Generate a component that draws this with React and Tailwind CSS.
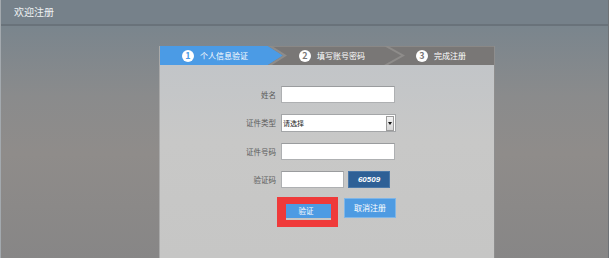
const steps = [
    { n: 1, label: '个人信息验证', w: 'w-[123px]', pl: 'pl-[22px]', num: 'text-[#4b9be5]' },
    { n: 2, label: '填写账号密码', w: 'w-[118px]', pl: 'pl-[16px]', num: 'text-[#797776]' },
    { n: 3, label: '完成注册', w: 'flex-1', pl: 'pl-[15px]', num: 'text-[#797776]' },
]

const Input = ({ w = 'w-[114px]' }) => (
    <div className={`${w} h-[17px] bg-white border border-[#aeb0b2] border-t-[#9a9c9e]`} />
)

const Row = ({ label, children }) => (
    <div className="flex items-center">
        <div className="w-[116px] text-right text-[7.5px] leading-none text-[#5b5b5b]">{label}</div>
        <div className="ml-[5px] flex items-center">{children}</div>
    </div>
)

export default function App() {
    return (
        <div className="flex h-[258px] w-[609px] flex-col overflow-hidden border-x border-l-[#a3a9ae] border-r-[#6e7276] font-['Noto_Sans_CJK_SC','Noto_Sans',sans-serif]">
            {/* Top bar */}
            <div className="flex h-[26px] shrink-0 items-center border-b-2 border-[#69727a] bg-[#76818a] pl-[13px] pb-[2px] text-[10px] text-[#eef1f3]">
                欢迎注册
            </div>

            <div className="flex-1 bg-[linear-gradient(180deg,#7a858d_0%,#8a8b8c_30%,#8f8c8a_55%,#878686_100%)] pl-[158px] pt-[20px]">
                <div className="flex h-full w-[336px] flex-col border-x border-l-[#a9a9a9] border-r-[#8e8e8e]">
                    {/* Step tabs */}
                    <div className="relative h-[19px] shrink-0 bg-[#797776]">
                        <svg className="absolute inset-0" width="334" height="19" viewBox="0 0 334 19">
                            <rect x="0" y="0" width="334" height="1" fill="#8a8886" />
                            <polygon points="0,0 108,0 123,9.5 108,19 0,19" fill="#4b9be5" />
                            <polygon points="108,0 112,0 127,9.5 112,19 108,19 123,9.5" fill="#8e8c8a" />
                            <polygon points="224,0 228,0 245,9.5 228,19 224,19 241,9.5" fill="#8e8c8a" />
                        </svg>
                        <div className="relative flex h-full">
                            {steps.map((s) => (
                                <div key={s.n} className={`${s.w} ${s.pl} flex items-center gap-[6px]`}>
                                    <span className={`flex h-[12px] w-[12px] items-center justify-center rounded-full bg-white text-[9px] font-bold leading-none ${s.num}`}>
                                        {s.n}
                                    </span>
                                    <span className="text-[8px] leading-none text-white">{s.label}</span>
                                </div>
                            ))}
                        </div>
                    </div>

                    {/* Form */}
                    <div className="flex-1 bg-[linear-gradient(180deg,#c2c5c8_0%,#c8c8c7_40%,#c6c6c5_100%)] pt-[21px]">
                        <div className="flex flex-col gap-[11px]">
                            <Row label="姓名">
                                <Input />
                            </Row>
                            <Row label="证件类型">
                                <div className="flex h-[18px] w-[115px] items-center justify-between border border-[#a4a6a8] bg-white pl-[1px] pr-[1px]">
                                    <span className="text-[7px] leading-none text-[#1a1a1a]">请选择</span>
                                    <span className="flex h-[15px] w-[8px] items-center justify-center border border-[#9c9c9c] bg-[linear-gradient(180deg,#f4f4f4,#d6d6d6)]">
                                        <span className="h-0 w-0 border-x-[2px] border-t-[3px] border-x-transparent border-t-[#111]" />
                                    </span>
                                </div>
                            </Row>
                            <Row label="证件号码">
                                <Input />
                            </Row>
                            <Row label="验证码">
                                <Input w="w-[63px]" />
                                <div className="ml-[4px] flex h-[17px] w-[42px] items-center justify-center border border-[#4a78a8] bg-[#2e6096] font-['Liberation_Sans',sans-serif] text-[8px] font-bold italic leading-none text-white">
                                    60509
                                </div>
                            </Row>
                        </div>

                        {/* Buttons */}
                        <div className="mt-[9px] flex items-start pl-[117px]">
                            <div className="h-[30px] w-[61px] border-[7px] border-l-[9px] border-[#ef3a3a]">
                                <div className="flex h-[14px] items-center justify-center bg-[#4d9be3] pr-[5px] text-[7.5px] leading-none text-white">
                                    验证
                                </div>
                            </div>
                            <button className="ml-[6px] mt-[1px] flex h-[20px] w-[52px] items-center justify-center border border-[#7fb6e8] bg-[#4e9be2] text-[8px] leading-none text-white">
                                取消注册
                            </button>
                        </div>
                    </div>
                </div>
            </div>
        </div>
    )
}
